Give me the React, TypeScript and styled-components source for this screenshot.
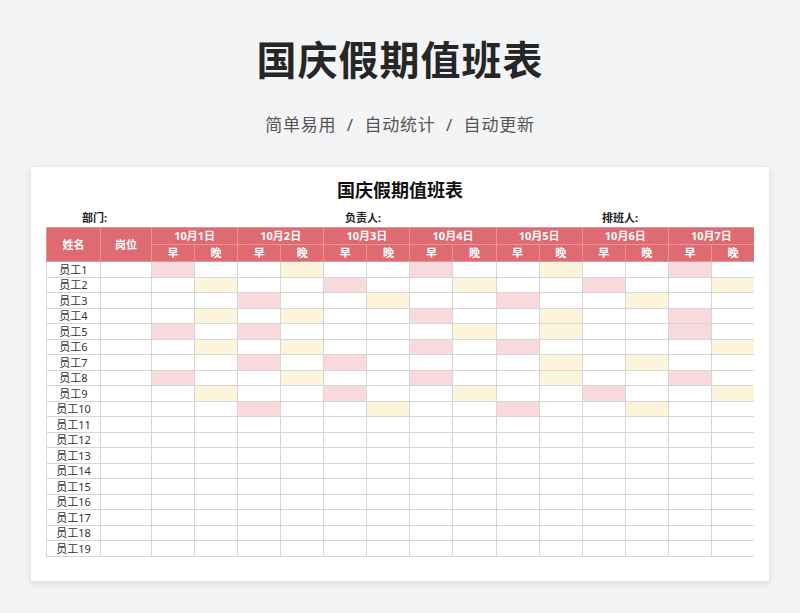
import React from 'react';
import styled, { createGlobalStyle } from 'styled-components';

const GlobalStyle = createGlobalStyle`
	body {
		margin: 0;
		background: #f3f4f6;
		font-family: "Noto Sans", "Noto Sans CJK SC", sans-serif;
	}
`;

type Mark = 'P' | 'Y';
const marks: Record<number, Record<number, Mark>> = {
	0: { 0: 'P', 3: 'Y', 6: 'P', 9: 'Y', 12: 'P' },
	1: { 1: 'Y', 4: 'P', 7: 'Y', 10: 'P', 13: 'Y' },
	2: { 2: 'P', 5: 'Y', 8: 'P', 11: 'Y' },
	3: { 1: 'Y', 3: 'Y', 6: 'P', 9: 'Y', 12: 'P' },
	4: { 0: 'P', 2: 'P', 7: 'Y', 9: 'Y', 12: 'P' },
	5: { 1: 'Y', 3: 'Y', 6: 'P', 8: 'P', 13: 'Y' },
	6: { 2: 'P', 4: 'P', 9: 'Y', 11: 'Y' },
	7: { 0: 'P', 3: 'Y', 6: 'P', 9: 'Y', 12: 'P' },
	8: { 1: 'Y', 4: 'P', 7: 'Y', 10: 'P', 13: 'Y' },
	9: { 2: 'P', 5: 'Y', 8: 'P', 11: 'Y' },
};

const days = [1, 2, 3, 4, 5, 6, 7];

const App = () => (
	<Page>
		<GlobalStyle />
		<Title>国庆假期值班表</Title>
		<Subtitle>简单易用 &nbsp;/&nbsp; 自动统计 &nbsp;/&nbsp; 自动更新</Subtitle>
		<Card>
			<SheetTitle>国庆假期值班表</SheetTitle>
			<Labels>
				<Label $w={263}>部门:</Label>
				<Label $w={257}>负责人:</Label>
				<Label>排班人:</Label>
			</Labels>
			<Clip>
				<Table>
					<colgroup>
						<ColW $w={54} />
						<ColW $w={51} />
						{Array.from({ length: 14 }).map((_, i) => (
							<ColW key={i} $w={43.07} />
						))}
					</colgroup>
					<thead>
						<tr>
							<Head rowSpan={2}>姓名</Head>
							<Head rowSpan={2}>岗位</Head>
							{days.map((d) => (
								<Head key={d} colSpan={2}>10月{d}日</Head>
							))}
						</tr>
						<tr>
							{days.map((d) => (
								<React.Fragment key={d}>
									<Head>早</Head>
									<Head>晚</Head>
								</React.Fragment>
							))}
						</tr>
					</thead>
					<tbody>
						{Array.from({ length: 19 }).map((_, r) => (
							<tr key={r}>
								<Cell>员工{r + 1}</Cell>
								<Cell />
								{Array.from({ length: 14 }).map((_, c) => (
									<Cell key={c} $mark={marks[r]?.[c]} />
								))}
							</tr>
						))}
					</tbody>
				</Table>
			</Clip>
		</Card>
	</Page>
);

export default App;

const Page = styled.div`
	width: 800px;
	height: 613px;
	display: flex;
	flex-direction: column;
	align-items: center;
	overflow: hidden;
`;

const Title = styled.h1`
	margin: 33px 0 0;
	font-size: 40px;
	line-height: 54px;
	font-weight: 700;
	color: #262626;
	letter-spacing: 1px;
`;

const Subtitle = styled.div`
	margin-top: 26px;
	font-size: 17px;
	line-height: 24px;
	color: #555;
	letter-spacing: 0.8px;
`;

const Card = styled.div`
	margin-top: 30px;
	width: 738px;
	height: 414px;
	background: #fff;
	box-shadow: 0 2px 8px rgba(0, 0, 0, 0.12);
	padding: 0 15px;
	box-sizing: border-box;
	display: flex;
	flex-direction: column;
`;

const SheetTitle = styled.div`
	text-align: center;
	font-size: 18px;
	font-weight: 700;
	color: #111;
	margin-top: 10px;
	line-height: 26px;
`;

const Labels = styled.div`
	display: flex;
	padding-left: 36px;
	margin-top: 7px;
	height: 17px;
`;

const Label = styled.div<{ $w?: number }>`
	width: ${(p) => (p.$w ? `${p.$w}px` : 'auto')};
	flex-shrink: 0;
	font-size: 11px;
	font-weight: 700;
	line-height: 15px;
	color: #222;
`;

const Clip = styled.div`
	height: 340px;
	overflow: hidden;
`;

const Table = styled.table`
	border-collapse: collapse;
	table-layout: fixed;
	width: 708px;
`;

const ColW = styled.col<{ $w: number }>`
	width: ${(p) => p.$w}px;
`;

const Head = styled.th`
	background: #df6b72;
	color: #fff;
	font-size: 11px;
	font-weight: 700;
	height: 16px;
	padding: 0;
	border: 1px solid #e8959a;
	text-align: center;
	line-height: 14px;
`;

const Cell = styled.td<{ $mark?: Mark }>`
	height: 15.5px;
	padding: 0;
	font-size: 11px;
	line-height: 13px;
	color: #333;
	text-align: center;
	border: 1px solid #d6d6d6;
	box-sizing: border-box;
	background: ${(p) => (p.$mark === 'P' ? '#f8d9dc' : p.$mark === 'Y' ? '#fdf4dc' : '#fff')};
`;
